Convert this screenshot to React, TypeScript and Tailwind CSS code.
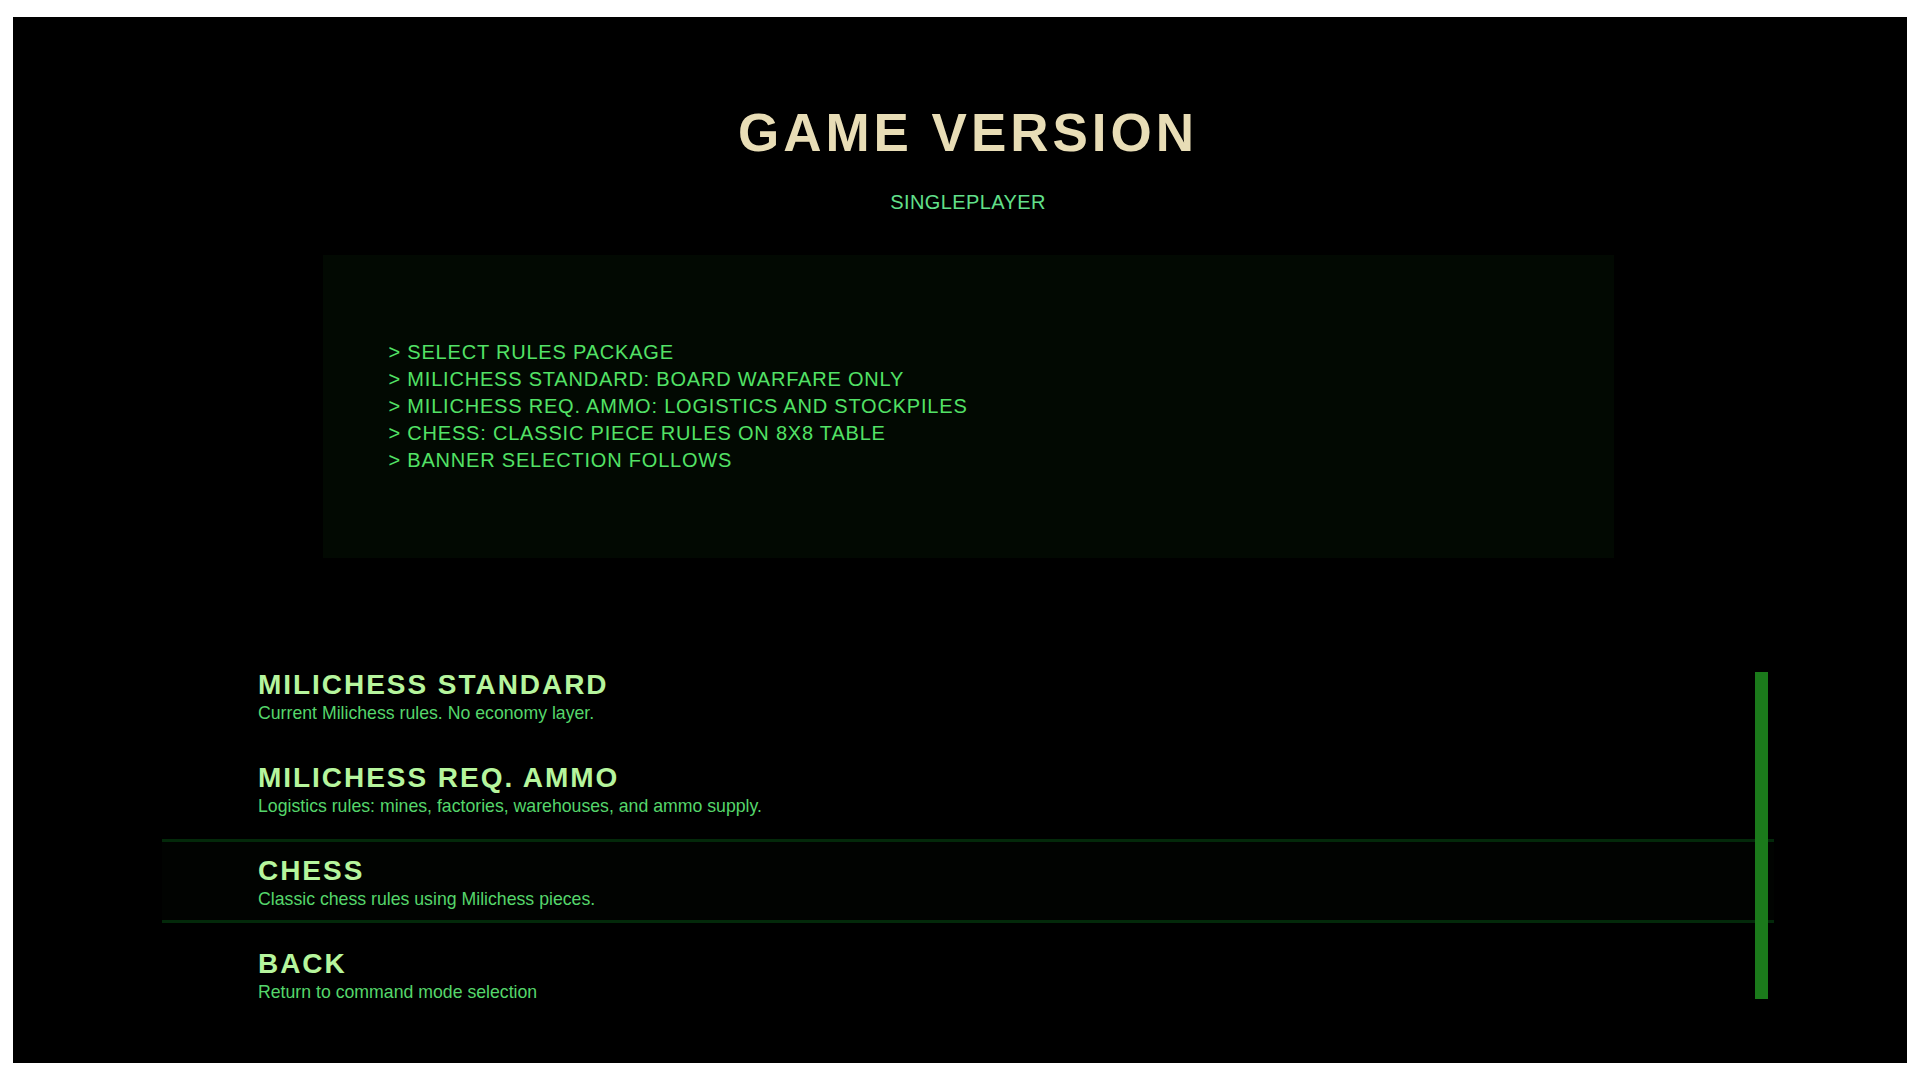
import React from "react";

const items = [
  { title: "MILICHESS STANDARD", desc: "Current Milichess rules. No economy layer.", selected: false },
  { title: "MILICHESS REQ. AMMO", desc: "Logistics rules: mines, factories, warehouses, and ammo supply.", selected: false },
  { title: "CHESS", desc: "Classic chess rules using Milichess pieces.", selected: true },
  { title: "BACK", desc: "Return to command mode selection", selected: false },
];

const lines = [
  "> SELECT RULES PACKAGE",
  "> MILICHESS STANDARD: BOARD WARFARE ONLY",
  "> MILICHESS REQ. AMMO: LOGISTICS AND STOCKPILES",
  "> CHESS: CLASSIC PIECE RULES ON 8X8 TABLE",
  "> BANNER SELECTION FOLLOWS",
];

export default function App() {
  return (
    <div className="h-screen w-full bg-white pt-[17px] pb-[17px] px-[13px] font-['Liberation_Sans',Arial,sans-serif]">
      <div className="h-full w-full bg-black pl-[149px] pr-[133px] pt-[89px] flex flex-col">
        <h1 className="text-center text-[53px] leading-none font-bold tracking-[0.075em] text-[#e8ddb6]">
          GAME VERSION
        </h1>
        <div className="mt-[33px] text-center text-[20px] leading-none tracking-[0.02em] text-[#62e08b]">
          SINGLEPLAYER
        </div>
        <div className="mt-[43px] mx-auto w-[1291px] bg-[#020902] px-[66px] py-[84px]">
          {lines.map((l) => (
            <div key={l} className="text-[20px] leading-[27px] tracking-[0.04em] text-[#52e266]">
              {l}
            </div>
          ))}
        </div>
        <div className="relative mt-[95px] flex flex-col gap-[9px]">
          {items.map((it) => (
            <div
              key={it.title}
              className={
                it.selected
                  ? "border-y-[3px] border-[#03290a] bg-[#010301] pl-[96px] pt-[13px] pb-[10px]"
                  : "border-y-[3px] border-transparent pl-[96px] pt-[13px] pb-[10px]"
              }
            >
              <div className="text-[28px] leading-[32px] font-bold tracking-[0.07em] text-[#b6f59d]">
                {it.title}
              </div>
              <div className="mt-[2px] text-[17.7px] leading-[21px] text-[#55d66b]">{it.desc}</div>
            </div>
          ))}
          <div className="absolute right-[6px] top-[19px] h-[327px] w-[13px] bg-[#1b7a1b]" />
        </div>
      </div>
    </div>
  );
}
